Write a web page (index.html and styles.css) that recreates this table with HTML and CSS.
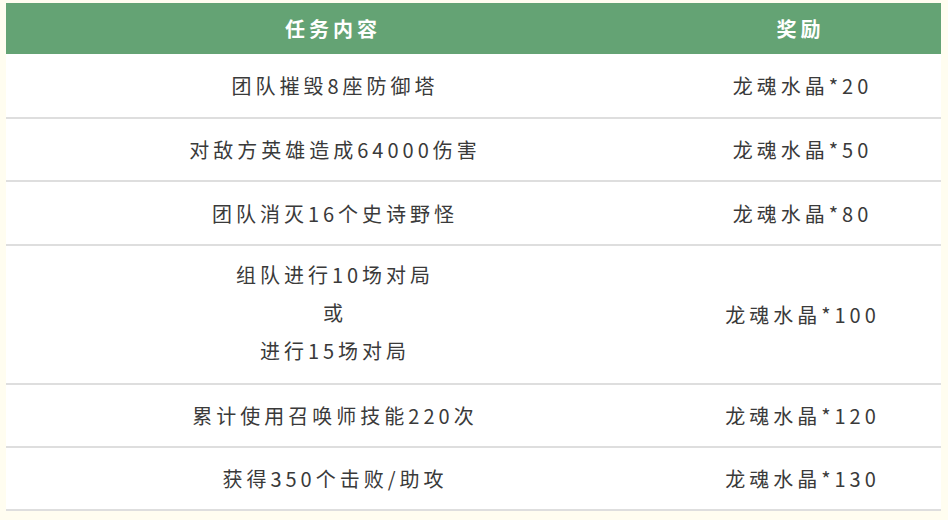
FILE: index.html
```html
<!DOCTYPE html>
<html lang="zh-CN">
<head>
<meta charset="utf-8">
<title>任务奖励</title>
<link rel="stylesheet" href="styles.css">
</head>
<body>
<table class="tasks">
  <thead>
    <tr class="head">
      <th class="col-task">任务内容</th>
      <th class="col-reward">奖励</th>
    </tr>
  </thead>
  <tbody>
    <tr class="row row-first">
      <td>团队摧毁8座防御塔</td>
      <td>龙魂水晶*20</td>
    </tr>
    <tr class="row">
      <td>对敌方英雄造成64000伤害</td>
      <td>龙魂水晶*50</td>
    </tr>
    <tr class="row row-mid">
      <td>团队消灭16个史诗野怪</td>
      <td>龙魂水晶*80</td>
    </tr>
    <tr class="row row-tall">
      <td class="multi"><p class="line">组队进行10场对局</p><p class="line">或</p><p class="line">进行15场对局</p></td>
      <td>龙魂水晶*100</td>
    </tr>
    <tr class="row">
      <td>累计使用召唤师技能220次</td>
      <td>龙魂水晶*120</td>
    </tr>
    <tr class="row">
      <td>获得350个击败/助攻</td>
      <td>龙魂水晶*130</td>
    </tr>
  </tbody>
</table>
</body>
</html>
```
FILE: styles.css
```css
html, body {
  margin: 0;
  background: #fffdf0;
}
body {
  padding: 3px 7px 0 6px;
  font-family: "Noto Sans CJK SC", "Noto Sans", sans-serif;
}
.tasks {
  width: 935px;
  border-collapse: collapse;
  table-layout: fixed;
  background: #ffffff;
}
.col-task { width: 654px; }
.col-reward { width: 281px; }
.head th {
  height: 51px;
  padding: 0;
  background: #64a374;
  color: #ffffff;
  font-size: 20px;
  font-weight: 700;
  letter-spacing: 4px;
  text-align: center;
  vertical-align: middle;
}
.row td {
  height: 61px;
  padding: 0 0 0 4px;
  text-align: center;
  vertical-align: middle;
  color: #3a3a3a;
  font-size: 20px;
  letter-spacing: 4px;
  border-bottom: 2px solid #dedede;
}
.row-first td { height: 63px; }
.row-mid td { height: 62px; }
.row-tall td { height: 137px; }
.row-tall td.multi { padding-bottom: 4px; height: 133px; }
.line {
  margin: 0;
  line-height: 38px;
}
```
